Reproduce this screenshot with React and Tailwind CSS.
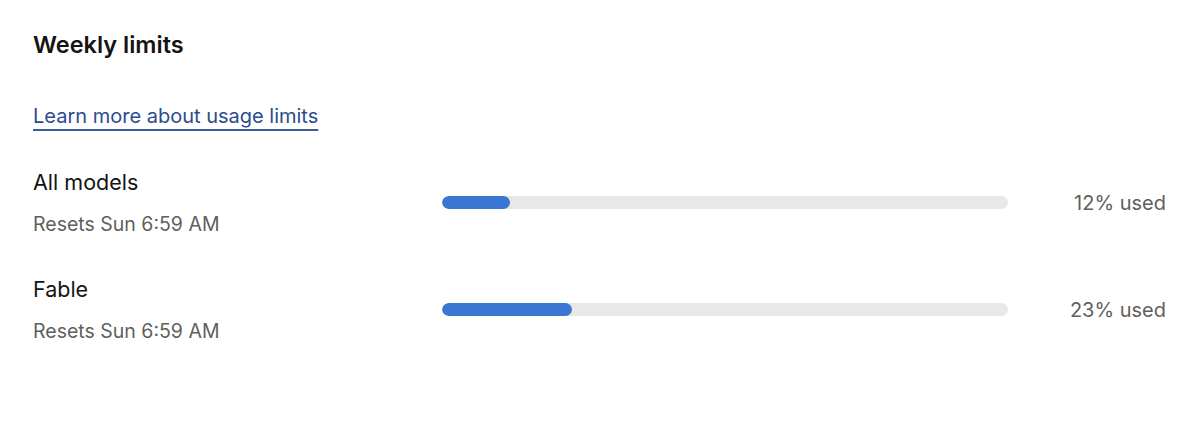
const LIMITS = [
  { name: "All models", resets: "Resets Sun 6:59 AM", pct: 12 },
  { name: "Fable", resets: "Resets Sun 6:59 AM", pct: 23 },
];

function LimitRow({ name, resets, pct }) {
  return (
    <div className="flex items-center">
      <div className="w-[409px] shrink-0">
        <p className="text-[21.5px] leading-[28px] text-[#141413]">{name}</p>
        <p className="mt-[15px] text-[19.5px] leading-[26px] text-[#5f5f5c]">{resets}</p>
      </div>
      <div className="flex-1 h-[13px] rounded-full bg-[#e8e8e7] overflow-hidden">
        <div className="h-full rounded-full bg-[#3b76d3]" style={{ width: `${pct}%` }} />
      </div>
      <div className="w-[158px] shrink-0 text-right text-[20px] text-[#5f5f5c]">{pct}% used</div>
    </div>
  );
}

export default function App() {
  return (
    <div
      className="w-[1200px] h-[424px] bg-white pl-[33px] pr-[34px] pt-[30px]"
      style={{ fontFamily: "Inter, 'Noto Sans', sans-serif" }}
    >
      <h2 className="text-[23.5px] leading-[30px] font-semibold text-[#141413]">Weekly limits</h2>
      <a
        href="#"
        className="inline-block mt-[42px] text-[20px] leading-[28px] text-[#2c4b8f] underline decoration-[2px] underline-offset-[6px] decoration-[#3d5a99]"
      >
        Learn more about usage limits
      </a>
      <div className="mt-[38px] flex flex-col gap-[38px]">
        {LIMITS.map((l) => (
          <LimitRow key={l.name} {...l} />
        ))}
      </div>
    </div>
  );
}
